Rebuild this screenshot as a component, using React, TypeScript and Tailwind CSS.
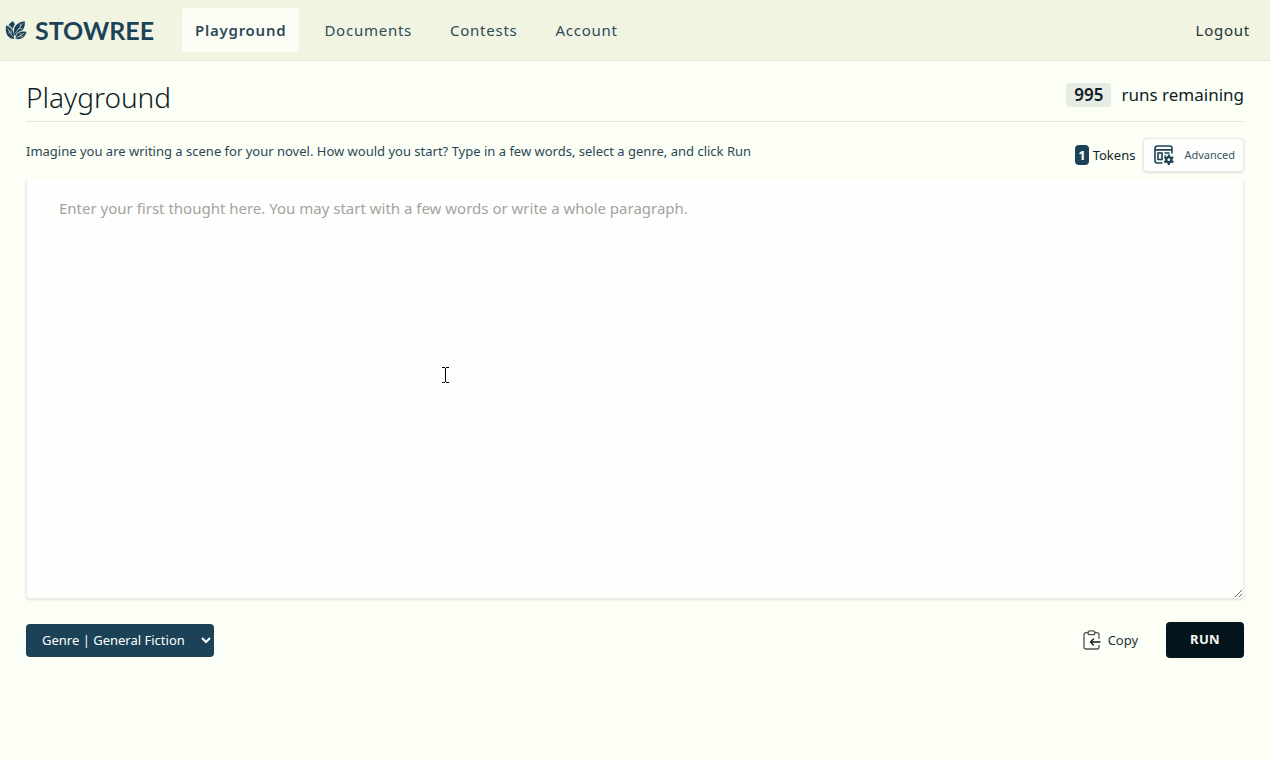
import { useState } from "react";
import clsx from "clsx";

const navLinks = [
  { href: "#playground", label: "Playground" },
  { href: "#documents", label: "Documents" },
  { href: "#contests", label: "Contests" },
  { href: "#account", label: "Account" },
];

const genres = ["General Fiction", "Fantasy", "Mystery", "Romance"];

function LeafLogo() {
  return (
    <svg viewBox="0 0 22 20" className="h-5 w-[22px]" fill="none" aria-hidden="true">
      <g fill="#1b4257">
        <path d="M9 19C4 18.600 1 15 .8 9.400c0-1.400.1-2.700.4-3.900 1.500.4 2.800 1.100 3.900 2 3.100 2.500 4.500 6.200 3.900 11.500Z" />
        <path d="M10.200 16.200C8.300 12 8.500 8 11 5.200 13.100 2.900 16 1.700 19.800 1.200c.4 4.700-.7 8-3.400 9.600-3.300.8-5.200 2.500-6.200 5.400Z" />
        <path d="M3.600 5.300C4.600 3.700 6 2.400 7.900 1.300c1 1 1.700 2.100 2 3.200-1.200 1.400-1.800 3-2 4.900-1-1.900-2.400-3.200-4.300-4.100Z" />
        <path d="M10.500 19c.2-4.300 2.600-7 6.900-7.500 1.500-.1 2.800 0 4.100.5-1.400 5.100-5.300 7.900-11 7Z" />
      </g>
      <g stroke="#eef3e0" strokeWidth=".6" strokeLinecap="round">
        <path d="M2.800 8.500 8 17M4.300 11l-.3 2.300M5.900 13.500l.4-2.800" />
        <path d="m17.600 3.600-7 9.200M15.400 6.400l-.1-2.400M13.500 8.900l3.300-.5" />
        <path d="m19 13.300-7.700 4.700M16.500 14.800l-1.200-1.600M14.300 16.200l3.300.2" />
      </g>
    </svg>
  );
}

function PanelGearIcon() {
  return (
    <svg viewBox="0 0 20 20" className="size-5" fill="none" stroke="#1b4257" strokeWidth="1.600" aria-hidden="true">
      <path d="M18 8.500V3.200A2.200 2.200 0 0 0 15.800 1H3.200A2.200 2.200 0 0 0 1 3.200v12.600A2.200 2.200 0 0 0 3.200 18H8.500" />
      <path d="M1 4.900h17M10.500 8h5M10.500 11h1.500" />
      <rect x="4" y="8" width="4" height="6.500" />
      <circle cx="14.800" cy="14.700" r="2.600" strokeWidth="2.400" />
      <path
        d="M14.800 9.500v2M14.800 18v2M10.300 12.100l1.700 1M17.600 16.300l1.700 1M10.300 17.300l1.700-1M17.600 13.100l1.700-1"
        strokeWidth="2.200"
      />
    </svg>
  );
}

function ClipboardIcon() {
  return (
    <svg
      viewBox="0 0 18 20"
      className="h-5 w-[18px]"
      fill="none"
      stroke="#505456"
      strokeWidth="1.300"
      strokeLinecap="round"
      strokeLinejoin="round"
      aria-hidden="true"
    >
      <path d="M5 2.700H3A2 2 0 0 0 1 4.700v12.300a2 2 0 0 0 2 2h11a2 2 0 0 0 2-2v-1.500M12 2.700h2a2 2 0 0 1 2 2V8.500" />
      <path d="M7 .8h3c1.500 0 2 .8 2 1.900S11.200 4.600 10 4.600H7c-1.200 0-2-.8-2-1.900S5.500.8 7 .8Z" />
      <path d="M17 12H7.500m3-3-3 3 3 3" stroke="#15191b" />
    </svg>
  );
}

function TextCursor() {
  return (
    <svg viewBox="0 0 7 16" className="h-4 w-[7px]" stroke="#000" shapeRendering="crispEdges" aria-hidden="true">
      <path d="M0 .5h3M4 .5h3M3.500 1v14M0 15.500h3M4 15.500h3" />
    </svg>
  );
}

function Navbar() {
  return (
    <header className="border-b border-[#e2e6e0] bg-[#f0f4e1]">
      <nav className="flex h-[60px] items-center pr-5 pl-[5px]" aria-label="Main navigation">
        <a href="#home" className="flex items-center gap-2 text-[#1b4257]">
          <LeafLogo />
          <span className="font-['Lato',sans-serif] text-[25px] leading-8 font-bold">STOWREE</span>
        </a>
        <div className="ml-7 flex items-center gap-3">
          {navLinks.map((link, i) => (
            <a
              key={link.href}
              href={link.href}
              aria-current={i === 0 ? "page" : undefined}
              className={clsx(
                "rounded px-[13px] py-2.5 text-[15px] leading-6 tracking-wider text-[#2d4a5a]",
                i === 0 && "bg-[#fcfef6] font-semibold"
              )}
            >
              {link.label}
            </a>
          ))}
        </div>
        <a href="#logout" className="ml-auto text-[15px] leading-6 tracking-wider text-[#263238]">
          Logout
        </a>
      </nav>
    </header>
  );
}

export default function App() {
  const [text, setText] = useState("");
  const [genre, setGenre] = useState(genres[0]);

  return (
    <div className="min-h-screen bg-[#fcfff5] font-['Noto_Sans','Open_Sans',sans-serif] text-[#0f1e26]">
      <Navbar />
      <main className="px-[26px] pt-[18px]">
        <div className="flex items-center justify-between border-b border-[#e3e6e0] pb-1.5">
          <h1 className="text-[28px] leading-9 font-light">Playground</h1>
          <p className="flex items-center gap-2.5 pb-1 text-[17px] leading-6">
            <span className="rounded bg-[#e7ece4] px-2 font-semibold">995</span>
            runs remaining
          </p>
        </div>

        <div className="flex items-center justify-between pt-4 pb-[7px]">
          <label htmlFor="scene" className="pb-2 text-[13px] leading-5 text-[#2b4756]">
            Imagine you are writing a scene for your novel. How would you start? Type in a few words, select a genre,
            and click Run
          </label>
          <div className="flex items-center gap-2">
            <p className="flex items-center gap-1 text-[13px] leading-5">
              <span className="rounded bg-[#1b4257] px-[3px] font-bold text-white">1</span>
              Tokens
            </p>
            <button
              type="button"
              className="flex h-[34px] items-center gap-2.5 rounded border border-[#e7eae7] bg-[#fefffc] pr-2 pl-2.5 text-[11px] text-[#3a5361] shadow-sm"
            >
              <PanelGearIcon />
              Advanced
            </button>
          </div>
        </div>

        <div className="relative">
          <textarea
            id="scene"
            value={text}
            onChange={(e) => setText(e.target.value)}
            placeholder="Enter your first thought here. You may start with a few words or write a whole paragraph."
            className="block h-[420px] w-full rounded border border-[#eceeed] border-t-transparent bg-[#fefffd] px-8 py-4 text-[15px] leading-6 shadow-sm outline-none placeholder:text-[#a3a3a3]"
          />
          <div className="pointer-events-none absolute top-[188px] left-[416px]">
            <TextCursor />
          </div>
        </div>

        <div className="flex items-center justify-between pt-[23px]">
          <select
            aria-label="Genre"
            value={genre}
            onChange={(e) => setGenre(e.target.value)}
            className="h-[33px] w-[188px] rounded-sm bg-[#1b4257] pl-3 text-[13px] text-white"
          >
            {genres.map((g) => (
              <option key={g} value={g}>
                Genre | {g}
              </option>
            ))}
          </select>
          <div className="flex items-center gap-7">
            <button type="button" className="flex items-center gap-[7px] text-[13px] leading-5 text-[#263238]">
              <ClipboardIcon />
              Copy
            </button>
            <button
              type="button"
              className="h-9 rounded bg-[#03141c] px-6 text-[13px] font-bold tracking-wide text-[#f3f5f0]"
            >
              RUN
            </button>
          </div>
        </div>
      </main>
    </div>
  );
}
